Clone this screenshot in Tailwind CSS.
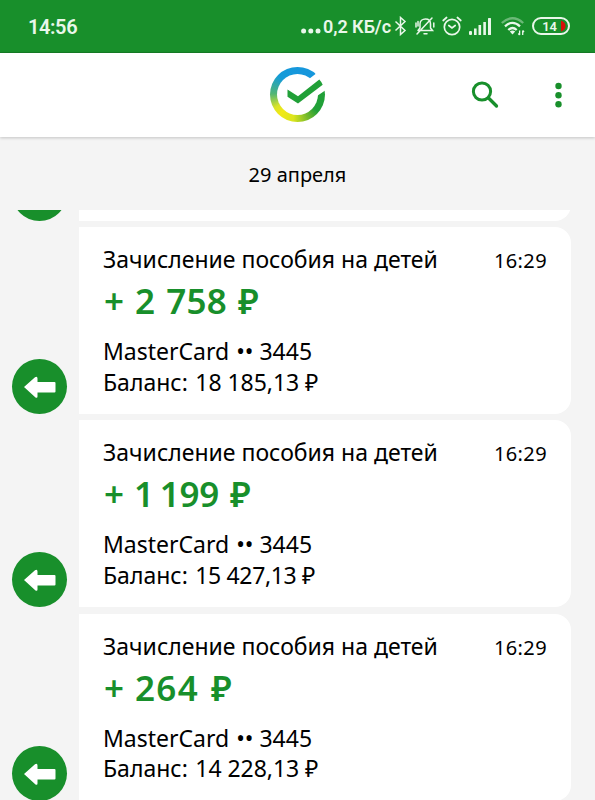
<!DOCTYPE html>
<html lang="ru">
<head>
<meta charset="utf-8">
<title>29 апреля</title>
<script src="https://cdn.jsdelivr.net/npm/@tailwindcss/browser@4"></script>
</head>
<body class="w-[595px] h-[800px] overflow-hidden flex flex-col bg-[#f4f4f4] text-black font-['Noto_Sans',sans-serif]">
<svg class="hidden"><defs>
  <symbol id="arrow" viewBox="0 0 55 55"><path d="M12 28 23 18.200Q25.500 17 25.500 19.500V23H42.500Q43.500 23 43.500 24V32.500Q43.500 33.500 42.500 33.500H25.500V37.500Q25.500 39.500 23.500 38.500Z" fill="#fff"/></symbol>
</defs></svg>
<div class="h-[53px] shrink-0 bg-[#188f2b] border-b border-[#157d26] flex items-center pl-7 pr-[25px] text-[#e9f7ea] font-['Roboto',sans-serif] font-semibold">
  <span class="text-[20px] leading-none tracking-[-0.4px] mt-px">14:56</span>
  <svg class="ml-auto mt-[10px]" width="20" height="6" viewBox="0 0 20 6" fill="currentColor"><circle cx="2.600" cy="3" r="2.500"/><circle cx="9.800" cy="3" r="2.500"/><circle cx="17" cy="3" r="2.500"/></svg>
  <span class="text-[18px] leading-none ml-[2px] mt-px whitespace-nowrap w-[67px] tracking-[-0.05px]">0,2 КБ/с</span>
  <svg class="ml-[4px]" width="13" height="20" viewBox="0 0 13 20" fill="none" stroke="currentColor" stroke-width="1.500"><path d="M1.500 5.500 11 14.500 6.500 18.500V1.500L11 5.500 1.500 14.500"/></svg>
  <svg class="ml-[8px]" width="20" height="20" viewBox="0 0 20 20" fill="none" stroke="currentColor" stroke-width="1.500" stroke-linecap="round"><path d="M4 14.500H17.500L15.500 12V8C15.500 5 13.500 3 10.500 3S5 5 5 8V12L3 14.500M9 17.800H12M2 18 17 2M1 7V11M3 5.500V10M18.800 7V11"/></svg>
  <svg class="ml-[7px]" width="20" height="20" viewBox="0 0 20 20" fill="none" stroke="currentColor" stroke-width="1.700" stroke-linecap="round"><circle cx="10" cy="11" r="7.700"/><path d="M1.200 4.500 4.600 1.500M18.800 4.500 15.400 1.500M6.800 9.500 10 12 13.200 9.500"/></svg>
  <svg class="ml-[7px]" width="23" height="17" viewBox="0 0 23 17" fill="currentColor"><rect x="0" y="13" width="3" height="4" rx="1"/><rect x="5" y="10.500" width="2.600" height="6.500"/><rect x="9.500" y="7" width="2.600" height="10"/><rect x="14.300" y="4" width="2.600" height="13"/><rect x="19" y="0" width="3" height="17" rx=".5"/></svg>
  <svg class="ml-[9px]" width="24" height="20" viewBox="0 0 24 20" fill="none" stroke="currentColor" stroke-width="2.300"><path opacity=".4" d="M.8 7Q11.500-2.500 22.200 7"/><path d="M4 10.300Q11.500 3.500 19 10.300M7.300 14Q11.500 10 15.700 14"/><path d="M8.800 15.500Q11.500 13.500 14.200 15.500L11.500 18.500Z" fill="currentColor" stroke="none"/><path stroke-width="1.300" d="M18.600 14.500V19M21.700 14.500V19M17.300 17.500 18.600 19M23 16 21.700 14.500"/></svg>
  <div class="ml-[7px] w-[38px] h-[18px] rounded-full border-2 border-[#e9f7ea] flex items-center justify-end overflow-hidden">
    <span class="text-[13px] leading-none mr-[4px]">14</span><svg class="mr-[2px]" width="5" height="12" viewBox="0 0 5 12"><path d="M0 1Q0 0 1 1 4.500 2.500 4.500 6T1 11Q0 12 0 11Z" fill="#d80e0b"/></svg>
  </div>
</div>
<header class="h-[84px] shrink-0 bg-white flex items-center shadow-[0_1px_3px_rgba(0,0,0,.2)]">
  <div class="ml-[269px] w-[58px] h-[58px] relative">
    <div class="absolute left-[1px] top-px w-[55px] h-[55px] rounded-full bg-[conic-gradient(from_0deg,#1697dc_0deg,#1697dc_50deg,#21a038_60deg,#21a038_130deg,#72b82c_155deg,#dce51d_190deg,#f2e916_222deg,#d9e327_240deg,#51b574_272deg,#149bd8_315deg,#1697dc_360deg)]"></div>
    <svg class="absolute inset-0" width="58" height="58" viewBox="0 0 58 58"><circle cx="28.500" cy="28.500" r="20.500" fill="#fff"/><path d="M38 14.500 46.500 8V5H58V23.300L48 30Z" fill="#fff"/><path d="M18.500 23.500 29 30.200 50.300 13.500Q52.500 15.700 53.700 18.800L29 37.500 18.500 30.800Z" fill="#21a038"/></svg>
  </div>
  <svg class="ml-[144px]" width="30" height="30" viewBox="0 0 30 30" fill="none" stroke="#188f2b" stroke-linecap="round"><circle cx="11" cy="11.500" r="8.600" stroke-width="3"/><path d="M17.500 18 25.500 26" stroke-width="3.300"/></svg>
  <svg class="ml-[54px]" width="8" height="28" viewBox="0 0 8 28" fill="#188f2b"><circle cx="3.500" cy="5" r="3.200"/><circle cx="3.500" cy="14.200" r="3.200"/><circle cx="3.500" cy="23.300" r="3.200"/></svg>
</header>
<div class="h-[73px] shrink-0 flex items-center justify-center text-[20px] leading-none"><span class="mt-[2px]">29 апреля</span></div>
<main class="flex-1 min-h-0 overflow-hidden">
  <div class="h-[10.500px] flex items-end pl-[12px]">
    <div class="w-[55px] h-[55px] rounded-full bg-[#188f2b] shrink-0"></div>
    <div class="ml-[12px] w-[492px] h-[60px] bg-white rounded-br-[16px]"></div>
  </div>
  <article class="mt-[6.500px] h-[187px] flex items-end pl-[12px]">
    <svg class="w-[55px] h-[55px] rounded-full bg-[#188f2b] shrink-0"><use href="#arrow"/></svg>
    <div class="ml-[12px] w-[492px] h-full bg-white rounded-r-[16px] pl-[24px] pr-[24px] pt-[16px]">
      <div class="flex justify-between items-baseline h-[32px] leading-8 whitespace-nowrap"><span class="text-[23px]">Зачисление пособия на детей</span><span class="text-[20px] tracking-[0.400px]">16:29</span></div>
      <div class="text-[35px] leading-[48px] h-[61px] pt-[2px] font-semibold text-[#188f2b] whitespace-nowrap flex"><span class="ml-[1px] w-[31px]">+</span><span class="w-[103px] tracking-[0.3px] [word-spacing:1.500px]">2 758</span><span>₽</span></div>
      <div class="text-[23px] leading-[30.500px] whitespace-nowrap"><p>MasterCard <span class="ml-px">•• 3445</span></p><p>Баланс: <span class="ml-[1.500px] tracking-[-0.05px]">18 185,13 ₽</span></p></div>
    </div>
  </article>
  <article class="mt-[6.300px] h-[187px] flex items-end pl-[12px]">
    <svg class="w-[55px] h-[55px] rounded-full bg-[#188f2b] shrink-0"><use href="#arrow"/></svg>
    <div class="ml-[12px] w-[492px] h-full bg-white rounded-r-[16px] pl-[24px] pr-[24px] pt-[16px]">
      <div class="flex justify-between items-baseline h-[32px] leading-8 whitespace-nowrap"><span class="text-[23px]">Зачисление пособия на детей</span><span class="text-[20px] tracking-[0.400px]">16:29</span></div>
      <div class="text-[35px] leading-[48px] h-[61px] pt-[2px] font-semibold text-[#188f2b] whitespace-nowrap flex"><span class="ml-[1px] w-[30px]">+</span><span class="w-[96px] tracking-[-0.2px] [word-spacing:-3px]">1 199</span><span>₽</span></div>
      <div class="text-[23px] leading-[30.500px] whitespace-nowrap"><p>MasterCard <span class="ml-px">•• 3445</span></p><p>Баланс: <span class="ml-[1.500px] tracking-[-0.350px]">15 427,13 ₽</span></p></div>
    </div>
  </article>
  <article class="mt-[6.300px] h-[187px] flex items-end pl-[12px]">
    <svg class="w-[55px] h-[55px] rounded-full bg-[#188f2b] shrink-0"><use href="#arrow"/></svg>
    <div class="ml-[12px] w-[492px] h-full bg-white rounded-r-[16px] pl-[24px] pr-[24px] pt-[16px]">
      <div class="flex justify-between items-baseline h-[32px] leading-8 whitespace-nowrap"><span class="text-[23px]">Зачисление пособия на детей</span><span class="text-[20px] tracking-[0.400px]">16:29</span></div>
      <div class="text-[35px] leading-[48px] h-[61px] pt-[2px] font-semibold text-[#188f2b] whitespace-nowrap flex"><span class="ml-[1px] w-[31px]">+</span><span class="w-[76px] tracking-[1.300px]">264</span><span>₽</span></div>
      <div class="text-[23px] leading-[30.500px] whitespace-nowrap"><p>MasterCard <span class="ml-px">•• 3445</span></p><p>Баланс: <span class="ml-[1.500px] tracking-[-0.05px]">14 228,13 ₽</span></p></div>
    </div>
  </article>
</main>
</body>
</html>
